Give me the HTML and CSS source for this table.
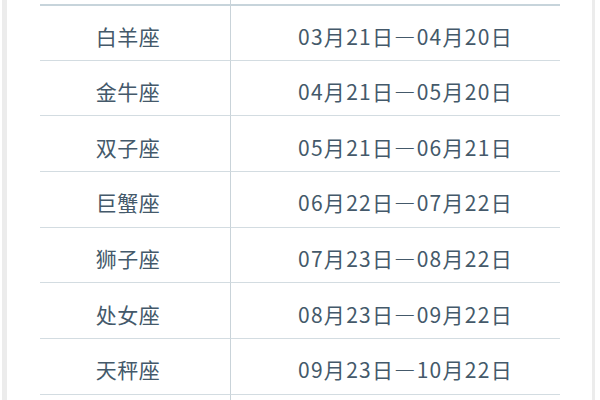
FILE: index.html
```html
<!DOCTYPE html>
<html lang="zh-CN">
<head>
<meta charset="utf-8">
<title>星座日期表</title>
<link rel="stylesheet" href="styles.css">
</head>
<body>
<div class="page">
  <div class="panel">
    <div class="table">
      <div class="cell name head"></div><div class="cell date head"></div>
      <div class="cell name">白羊座</div><div class="cell date">03月21日—04月20日</div>
      <div class="cell name">金牛座</div><div class="cell date">04月21日—05月20日</div>
      <div class="cell name">双子座</div><div class="cell date">05月21日—06月21日</div>
      <div class="cell name">巨蟹座</div><div class="cell date">06月22日—07月22日</div>
      <div class="cell name">狮子座</div><div class="cell date">07月23日—08月22日</div>
      <div class="cell name">处女座</div><div class="cell date">08月23日—09月22日</div>
      <div class="cell name">天秤座</div><div class="cell date">09月23日—10月22日</div>
      <div class="cell name"></div><div class="cell date"></div>
    </div>
  </div>
</div>
</body>
</html>
```
FILE: styles.css
```css
html, body {
  margin: 0;
  padding: 0;
  background: #ffffff;
  overflow: hidden;
}
.page {
  width: 600px;
  height: 400px;
  padding-left: 2px;
  box-sizing: border-box;
  overflow: hidden;
}
.panel {
  width: 593px;
  height: 400px;
  box-sizing: border-box;
  border-left: 5px solid #ececec;
  border-right: 3px solid #ececec;
  padding-left: 33px;
}
.table {
  display: grid;
  grid-template-columns: 190px 330px;
  grid-auto-rows: 55.7px;
  grid-template-rows: 4px;
  font-family: "Noto Sans CJK SC", "Microsoft YaHei", sans-serif;
  font-size: 21px;
  color: #44596a;
}
.cell {
  display: flex;
  align-items: center;
  justify-content: center;
  border-top: 1px solid #d3dce1;
  box-sizing: border-box;
  padding-top: 6px;
  white-space: nowrap;
}
.cell.head {
  border-top: none;
  padding: 0;
}
.table > .cell:nth-child(3),
.table > .cell:nth-child(4) {
  border-top: 2px solid #c7d4db;
}
.name {
  padding-right: 14px;
  letter-spacing: 0.5px;
}
.date {
  border-left: 1px solid #c9d3d9;
  padding-left: 20px;
  letter-spacing: 1.3px;
}
```
